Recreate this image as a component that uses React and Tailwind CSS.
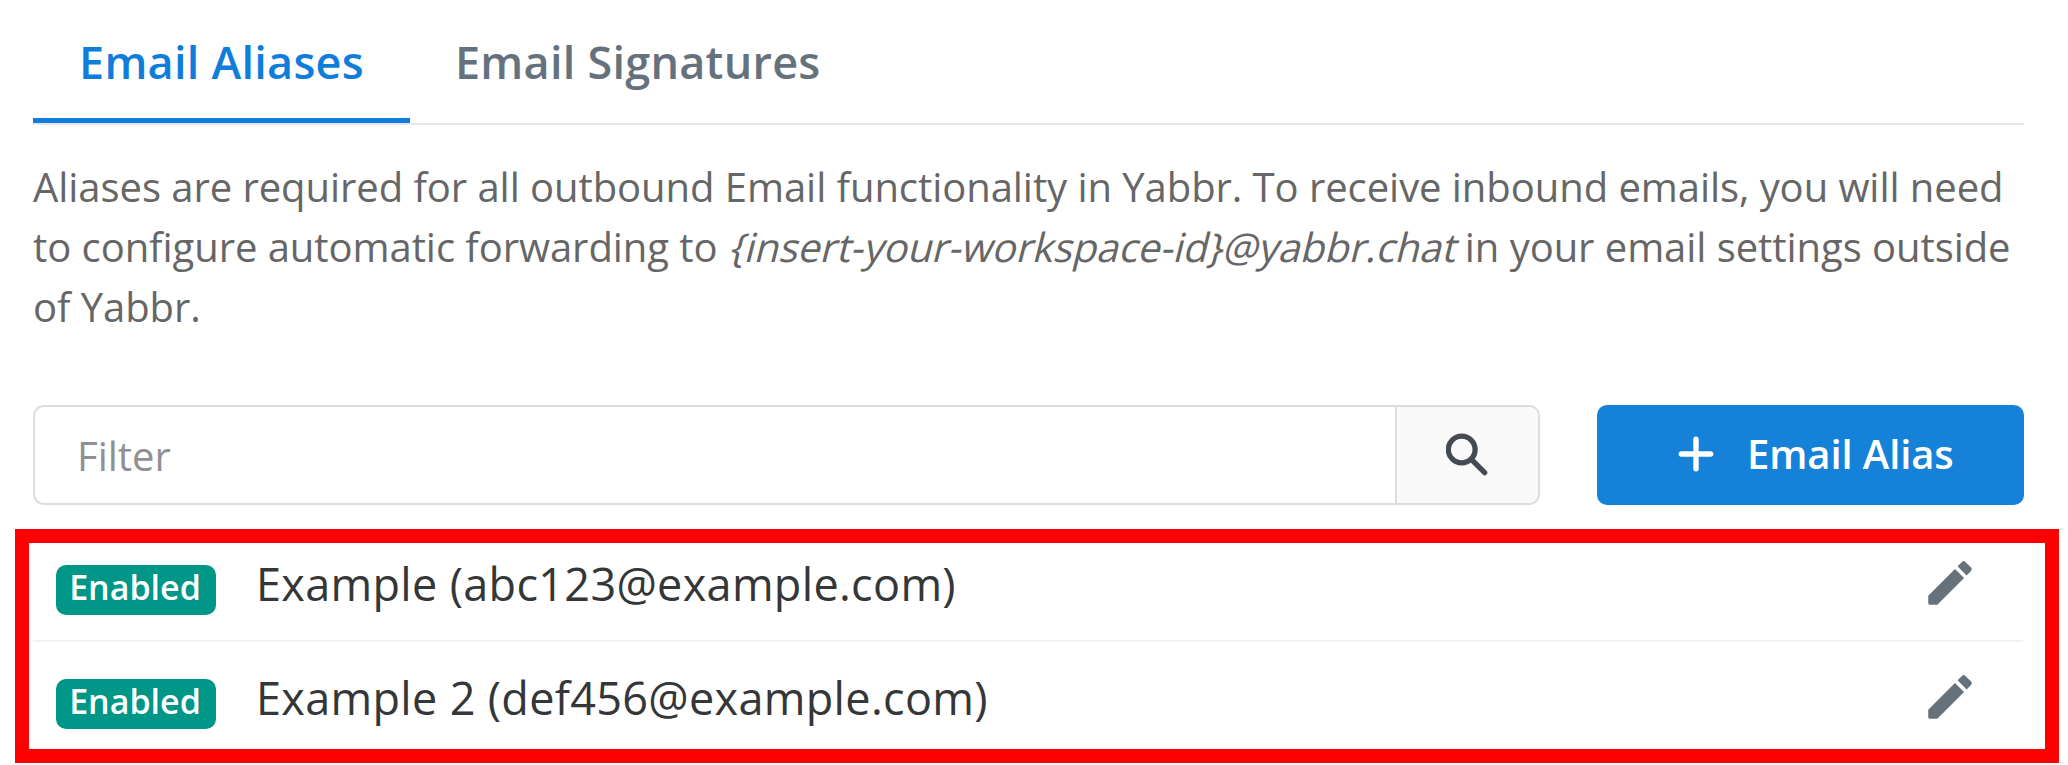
const aliases = [
  { name: 'Example (abc123@example.com)' },
  { name: 'Example 2 (def456@example.com)' },
];

function SearchIcon() {
  return (
    <svg viewBox="0 0 44 44" className="h-[44px] w-[44px] fill-none stroke-[#444b52]" strokeWidth="5.3" strokeLinecap="round">
      <circle cx="15.7" cy="16.5" r="13.4" />
      <path d="M27 28l11.7 11.6" />
    </svg>
  );
}

function PlusIcon() {
  return (
    <svg viewBox="0 0 36 36" className="h-[36px] w-[36px] stroke-white" strokeWidth="5.4" strokeLinecap="round">
      <path d="M18 3.3v29.4M3.3 18h29.4" />
    </svg>
  );
}

function PencilIcon() {
  return (
    <svg viewBox="0 0 24 24" className="h-[58px] w-[58px] fill-[#66727b]">
      <path d="M3 17.25V20.4c0 .33.27.6.6.6H6.75L17.81 9.94l-3.75-3.75L3 17.25zM20.71 7.04c.39-.39.39-1.02 0-1.41l-2.34-2.34a.9959.9959 0 0 0-1.41 0l-1.83 1.83 3.75 3.75 1.83-1.83z" />
    </svg>
  );
}

function AliasRow({ name }) {
  return (
    <li className="flex h-[114px] items-center border-b-2 border-[#f1f2f3] pb-[2px] pl-[23px] last:border-transparent">
      <span className="mt-[13px] flex h-[50px] w-[160px] items-center justify-center rounded-[10px] bg-[#009688] pr-[2px] pb-[5px] text-[34px] font-semibold text-white">
        Enabled
      </span>
      <span className="mt-[2px] ml-[40px] text-[45px] tracking-[0.32px] text-[#343638]">{name}</span>
      <button className="mr-[44px] ml-auto">
        <PencilIcon />
      </button>
    </li>
  );
}

export default function App() {
  return (
    <main className="h-[765px] w-[2068px] overflow-hidden bg-white font-['Open_Sans',sans-serif]">
      <nav className="mx-[33px] mr-[44px] flex h-[125px] border-b-2 border-[#e3e8ec] text-[45px] font-semibold tracking-[0.25px]">
        <a className="-mb-px flex h-[123px] w-[377px] items-center justify-center border-b-5 border-[#0f7ddb] pt-[5px] text-[#0f7ddb]">
          Email Aliases
        </a>
        <a className="flex h-[123px] items-center px-[45px] text-[#65727d]">Email Signatures</a>
      </nav>

      <p className="mt-[32px] ml-[33px] text-[40px] leading-[60px] tracking-[-0.06px] whitespace-nowrap text-[#666]">
        Aliases are required for all outbound Email functionality in Yabbr. To receive inbound emails, you will need
        <br />
        to configure automatic forwarding to{' '}
        <em className="inline-block translate-x-[4px] -skew-x-[14deg] not-italic">{'{insert-your-workspace-id}@yabbr.chat'}</em> in your email settings outside
        <br />
        of Yabbr.
      </p>

      <div className="mt-[68px] ml-[33px] flex h-[100px]">
        <div className="flex w-[1507px] overflow-hidden rounded-[11px] border-2 border-[#d9dee3]">
          <input
            className="min-w-0 flex-1 px-[42px] pt-[1px] text-[40px] outline-none placeholder:text-[#8e9093]"
            placeholder="Filter"
          />
          <button className="flex w-[143px] items-center justify-center border-l-2 border-[#d9dee3] bg-[#f9f9f9]">
            <SearchIcon />
          </button>
        </div>
        <button className="ml-[57px] flex w-[427px] items-center rounded-[10px] bg-[#1681d9] pb-[2px] pl-[81px] text-[40px] font-semibold text-white">
          <PlusIcon />
          <span className="ml-[33px] tracking-[-0.1px]">Email Alias</span>
        </button>
      </div>

      <section className="mt-[24px] ml-[15px] h-[234px] w-[2044px] border-14 border-[#f00]">
        <ul className="-mt-[15px] mr-[22px] ml-[4px]">
          {aliases.map((alias) => (
            <AliasRow key={alias.name} name={alias.name} />
          ))}
        </ul>
      </section>
    </main>
  );
}
